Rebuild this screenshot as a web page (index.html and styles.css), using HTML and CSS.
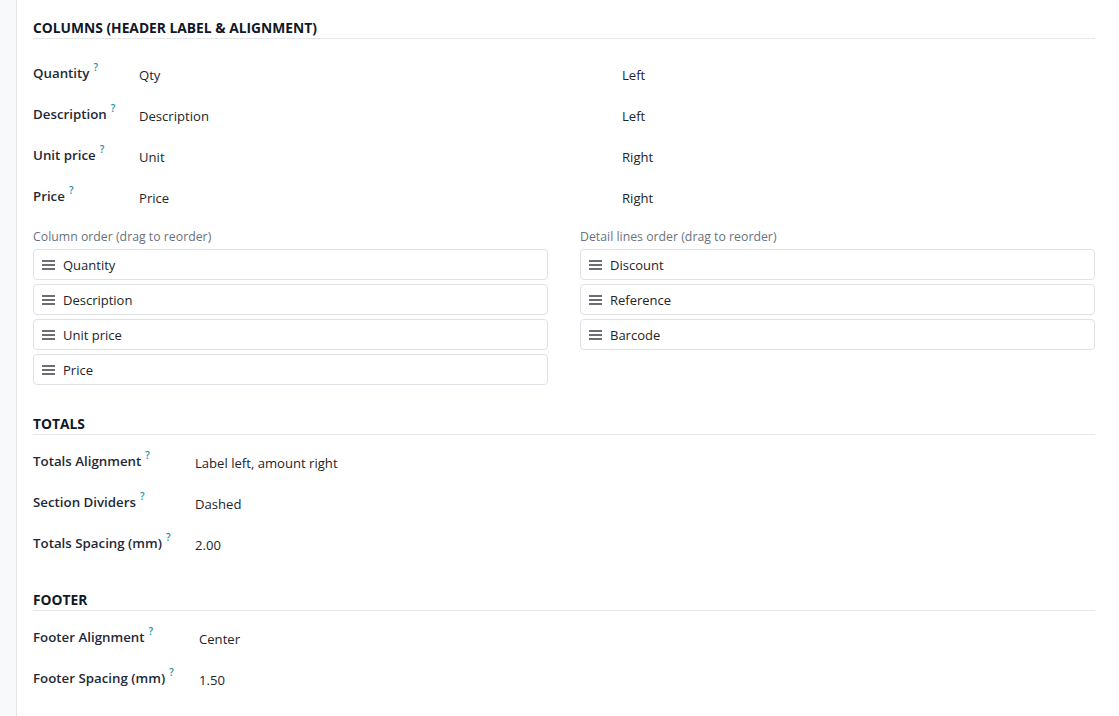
FILE: index.html
```html
<!DOCTYPE html>
<html lang="en">
<head>
<meta charset="utf-8">
<title>Receipt layout settings</title>
<link rel="stylesheet" href="styles.css">
</head>
<body>
<div class="layout">
  <aside class="gutter"></aside>
  <main class="sheet">

    <section class="section">
      <h2 class="section-title">Columns (Header Label &amp; Alignment)</h2>
      <div class="field-grid cols">
        <div class="row">
          <label class="label">Quantity<sup class="hint">?</sup></label>
          <span class="value">Qty</span>
          <span class="value">Left</span>
        </div>
        <div class="row">
          <label class="label">Description<sup class="hint">?</sup></label>
          <span class="value">Description</span>
          <span class="value">Left</span>
        </div>
        <div class="row">
          <label class="label">Unit price<sup class="hint">?</sup></label>
          <span class="value">Unit</span>
          <span class="value">Right</span>
        </div>
        <div class="row">
          <label class="label">Price<sup class="hint">?</sup></label>
          <span class="value">Price</span>
          <span class="value">Right</span>
        </div>
      </div>

      <div class="orders">
        <div class="order">
          <div class="caption">Column order (drag to reorder)</div>
          <ul class="sortable">
            <li class="item"><span class="handle"></span>Quantity</li>
            <li class="item"><span class="handle"></span>Description</li>
            <li class="item"><span class="handle"></span>Unit price</li>
            <li class="item"><span class="handle"></span>Price</li>
          </ul>
        </div>
        <div class="order">
          <div class="caption">Detail lines order (drag to reorder)</div>
          <ul class="sortable">
            <li class="item"><span class="handle"></span>Discount</li>
            <li class="item"><span class="handle"></span>Reference</li>
            <li class="item"><span class="handle"></span>Barcode</li>
          </ul>
        </div>
      </div>
    </section>

    <section class="section totals">
      <h2 class="section-title">Totals</h2>
      <div class="field-grid two wide">
        <div class="row">
          <label class="label">Totals Alignment<sup class="hint">?</sup></label>
          <span class="value">Label left, amount right</span>
        </div>
        <div class="row">
          <label class="label">Section Dividers<sup class="hint">?</sup></label>
          <span class="value">Dashed</span>
        </div>
        <div class="row">
          <label class="label">Totals Spacing (mm)<sup class="hint">?</sup></label>
          <span class="value">2.00</span>
        </div>
      </div>
    </section>

    <section class="section footer">
      <h2 class="section-title">Footer</h2>
      <div class="field-grid two wider">
        <div class="row">
          <label class="label">Footer Alignment<sup class="hint">?</sup></label>
          <span class="value">Center</span>
        </div>
        <div class="row">
          <label class="label">Footer Spacing (mm)<sup class="hint">?</sup></label>
          <span class="value">1.50</span>
        </div>
      </div>
    </section>

  </main>
</div>
</body>
</html>
```

FILE: styles.css
```css
* {
  box-sizing: border-box;
}

html,
body {
  margin: 0;
  padding: 0;
  background: #ffffff;
}

body {
  font-family: "Open Sans", "Noto Sans", "Liberation Sans", sans-serif;
  font-size: 13px;
  color: #212529;
}

.layout {
  display: flex;
  min-height: 716px;
}

.gutter {
  flex: 0 0 17px;
  background: #f8f9fa;
  border-right: 1px solid #e3e5e8;
}

.sheet {
  flex: 1;
  padding: 18px 24px 0 16px;
}

/* section headings */
.section-title {
  margin: 0;
  font-size: 13.8px;
  line-height: 20px;
  font-weight: 700;
  text-transform: uppercase;
  color: #111827;
  border-bottom: 1px solid #e5e7eb;
}

.totals {
  margin-top: 29px;
}

.footer {
  margin-top: 25px;
}

/* label / value rows */
.field-grid {
  display: flex;
  flex-direction: column;
}

.cols {
  margin-top: 15px;
}

.two {
  margin-top: 7px;
}

.row {
  display: grid;
  align-items: center;
  height: 41px;
}

.cols .row {
  grid-template-columns: 106px 483px 1fr;
}

.wide .row {
  grid-template-columns: 162px 1fr;
}

.wider .row {
  grid-template-columns: 166px 1fr;
}

.label {
  font-size: 13.3px;
  font-weight: 600;
  color: #1f2937;
  position: relative;
  top: -2px;
}

.hint {
  font-size: 10px;
  font-weight: 600;
  color: #1a8fa0;
  margin-left: 4px;
  vertical-align: 7px;
  line-height: 0;
}

.value {
  font-size: 13.1px;
  color: #212529;
}

/* drag lists */
.orders {
  display: grid;
  grid-template-columns: 1fr 1fr;
  column-gap: 32px;
  margin-top: 10px;
}

.caption {
  font-size: 12.3px;
  color: #6b7280;
  line-height: 17px;
  margin-bottom: 4px;
}

.sortable {
  list-style: none;
  margin: 0;
  padding: 0;
  display: flex;
  flex-direction: column;
  gap: 4px;
}

.item {
  display: flex;
  align-items: center;
  height: 31px;
  padding: 0 8px;
  border: 1px solid #dee2e6;
  border-radius: 4px;
  background: #ffffff;
  color: #212529;
}

.handle {
  width: 13px;
  height: 10px;
  margin-right: 8px;
  background:
    linear-gradient(#6b6f75, #6b6f75) 0 0 / 100% 2px no-repeat,
    linear-gradient(#6b6f75, #6b6f75) 0 4px / 100% 2px no-repeat,
    linear-gradient(#6b6f75, #6b6f75) 0 8px / 100% 2px no-repeat;
}
```
